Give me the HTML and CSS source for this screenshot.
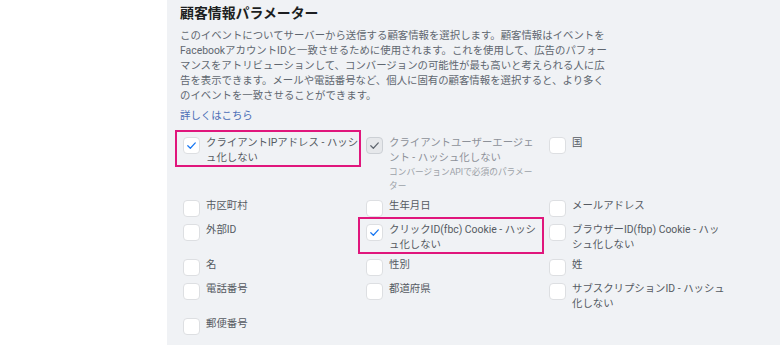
FILE: index.html
```html
<!DOCTYPE html>
<html lang="ja">
<head>
  <meta charset="UTF-8" />
  <meta name="viewport" content="width=device-width, initial-scale=1.0"/>
  <title>顧客情報パラメーター</title>
  <link rel="stylesheet" href="styles.css">
</head>
<body>
  <div class="panel">
    <h2 class="title">顧客情報パラメーター</h2>
    <p class="desc">このイベントについてサーバーから送信する顧客情報を選択します。顧客情報はイベントをFacebookアカウントIDと一致させるために使用されます。これを使用して、広告のパフォーマンスをアトリビューションして、コンバージョンの可能性が最も高いと考えられる人に広告を表示できます。メールや電話番号など、個人に固有の顧客情報を選択すると、より多くのイベントを一致させることができます。</p>
    <a class="more" href="#">詳しくはこちら</a>

    <div class="params">
      <label class="item marked">
        <span class="box checked"><svg viewBox="0 0 17 17"><path d="M4.3 8.8 L7.2 11.6 L12.8 5.6"/></svg></span>
        <span class="text">クライアントIPアドレス - ハッシュ化しない</span>
      </label>
      <label class="item disabled">
        <span class="box checked"><svg viewBox="0 0 17 17"><path d="M4.3 8.8 L7.2 11.6 L12.8 5.6"/></svg></span>
        <span class="text">クライアントユーザーエージェント - ハッシュ化しない<span class="note">コンバージョンAPIで必須のパラメーター</span></span>
      </label>
      <label class="item">
        <span class="box"></span>
        <span class="text">国</span>
      </label>

      <label class="item"><span class="box"></span><span class="text">市区町村</span></label>
      <label class="item"><span class="box"></span><span class="text">生年月日</span></label>
      <label class="item"><span class="box"></span><span class="text">メールアドレス</span></label>

      <label class="item"><span class="box"></span><span class="text">外部ID</span></label>
      <label class="item marked">
        <span class="box checked"><svg viewBox="0 0 17 17"><path d="M4.3 8.8 L7.2 11.6 L12.8 5.6"/></svg></span>
        <span class="text">クリックID(fbc) Cookie - ハッシュ化しない</span>
      </label>
      <label class="item"><span class="box"></span><span class="text">ブラウザーID(fbp) Cookie - ハッシュ化しない</span></label>

      <label class="item"><span class="box"></span><span class="text">名</span></label>
      <label class="item"><span class="box"></span><span class="text">性別</span></label>
      <label class="item"><span class="box"></span><span class="text">姓</span></label>

      <label class="item"><span class="box"></span><span class="text">電話番号</span></label>
      <label class="item"><span class="box"></span><span class="text">都道府県</span></label>
      <label class="item"><span class="box"></span><span class="text">サブスクリプションID - ハッシュ化しない</span></label>

      <label class="item"><span class="box"></span><span class="text">郵便番号</span></label>
    </div>
  </div>
</body>
</html>
```

FILE: styles.css
```css
body {
  margin: 0;
  background-color: #fff;
  font-family: Roboto, "Noto Sans CJK JP", sans-serif;
}

.panel {
  margin-left: 167px;
  min-height: 345px;
  box-sizing: border-box;
  padding: 4px 0 0 13px;
  background-color: #f0f2f5;
}

.title {
  margin: 0;
  font-size: 13.9px;
  line-height: 18px;
  font-weight: bold;
  color: #1c1e21;
}

.desc {
  margin: 6px 0 0;
  width: 432px;
  font-size: 10.4px;
  line-height: 15px;
  color: #606770;
}

.more {
  display: block;
  margin-top: 5px;
  font-size: 10.4px;
  line-height: 15px;
  color: #4a6db5;
  text-decoration: none;
}

.params {
  display: grid;
  grid-template-columns: repeat(3, 183px);
  row-gap: 5px;
  margin: 12px 0 0 -2px;
}

.item {
  position: relative;
  display: flex;
  align-items: flex-start;
  align-self: start;
  min-height: 19px;
  font-size: 10.4px;
  line-height: 15px;
  color: #555a62;
}

.item.marked::after {
  content: "";
  position: absolute;
  top: -5px;
  left: -3px;
  right: 0;
  bottom: -2px;
  border: 2px solid #e0167c;
}

.box {
  flex: none;
  width: 17px;
  height: 17px;
  margin: 2px 6px 0 5px;
  box-sizing: border-box;
  border: 1px solid #dddfe2;
  border-radius: 4px;
  background-color: #fff;
}

.box svg {
  display: block;
  width: 15px;
  height: 15px;
}

.box path {
  fill: none;
  stroke: #1877f2;
  stroke-width: 1.4;
  stroke-linecap: round;
  stroke-linejoin: round;
}

.text {
  width: 155px;
}

.note {
  display: block;
  width: 150px;
  font-size: 8.7px;
  line-height: 14px;
  color: #9da2a8;
}

.disabled .text {
  color: #8d9199;
}

.disabled .box {
  background-color: #e6e8eb;
  border-color: #ccd0d5;
}

.disabled .box path {
  stroke: #606770;
}
```
